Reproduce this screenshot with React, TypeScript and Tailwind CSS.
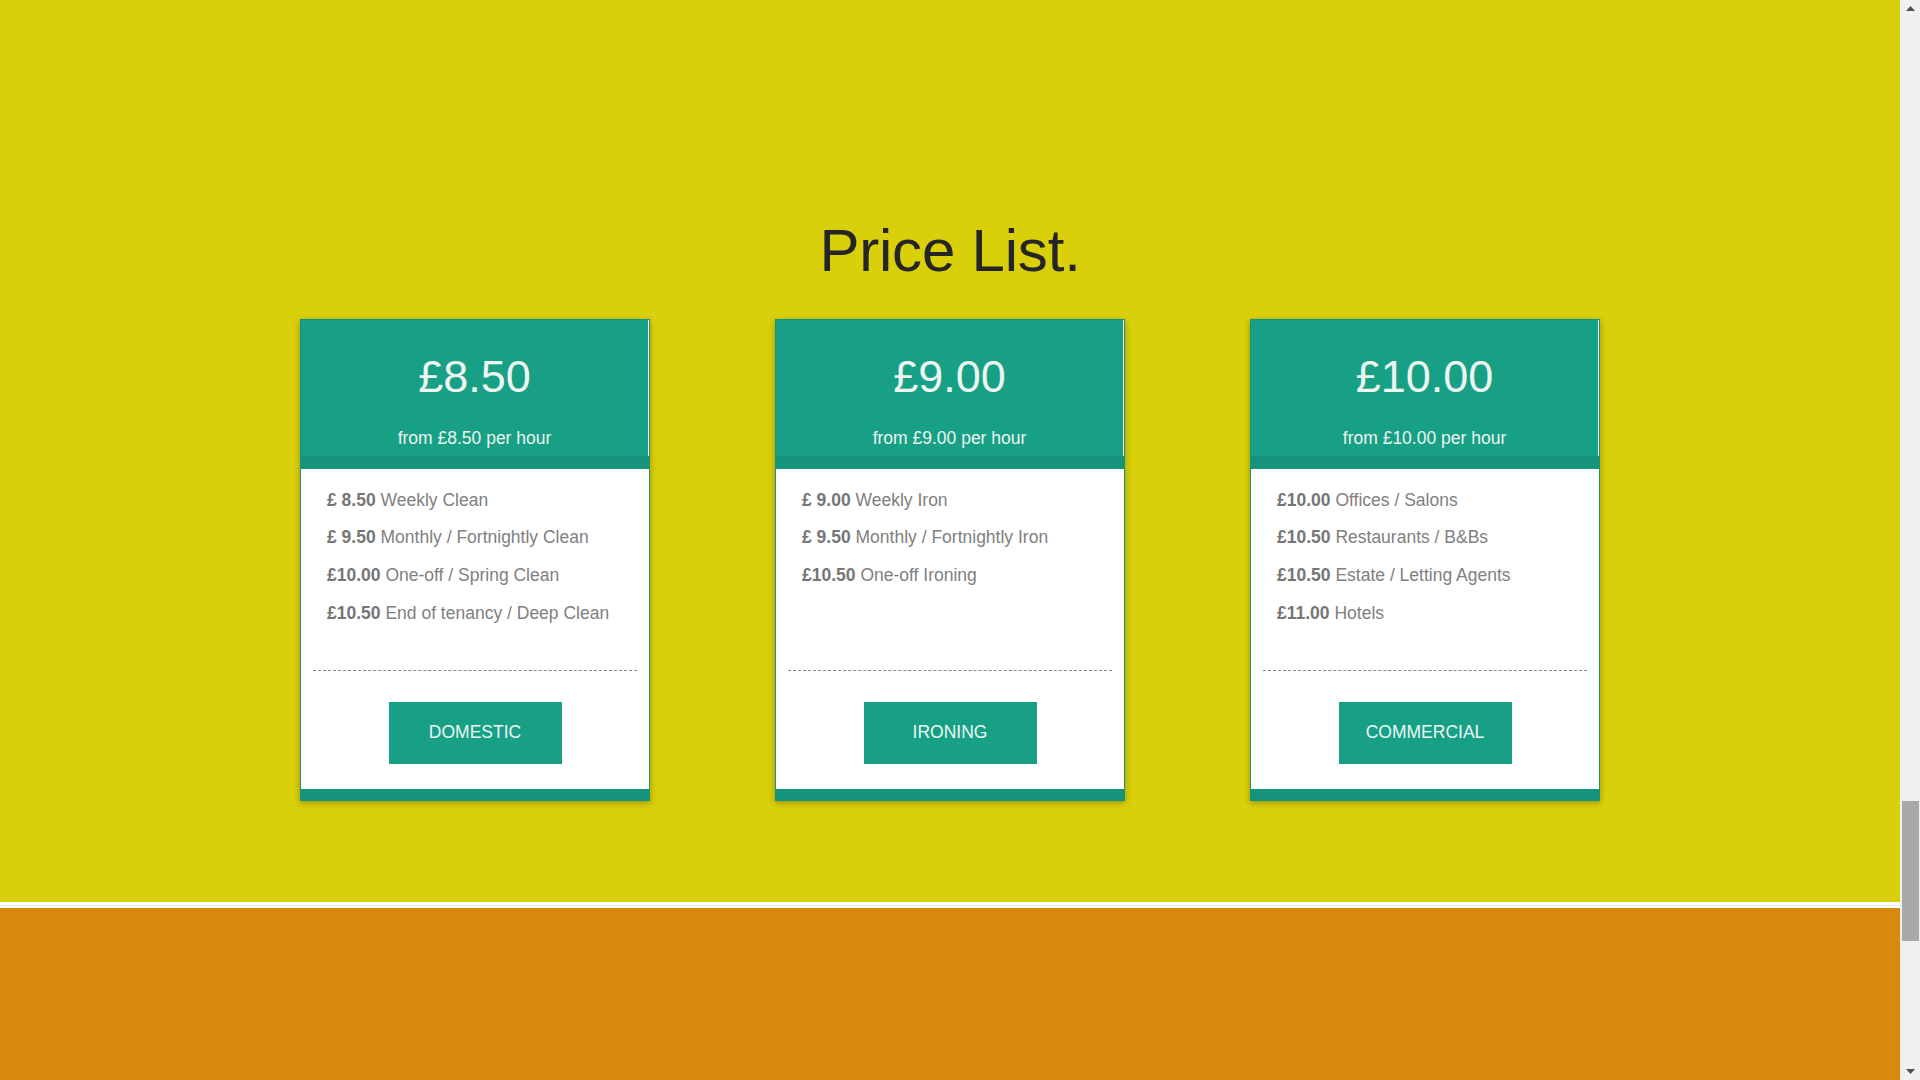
import React from "react";

const cards = [
  {
    price: "£8.50",
    from: "from £8.50 per hour",
    button: "DOMESTIC",
    items: [
      ["£ 8.50", "Weekly Clean"],
      ["£ 9.50", "Monthly / Fortnightly Clean"],
      ["£10.00", "One-off / Spring Clean"],
      ["£10.50", "End of tenancy / Deep Clean"],
    ],
  },
  {
    price: "£9.00",
    from: "from £9.00 per hour",
    button: "IRONING",
    items: [
      ["£ 9.00", "Weekly Iron"],
      ["£ 9.50", "Monthly / Fortnightly Iron"],
      ["£10.50", "One-off Ironing"],
    ],
  },
  {
    price: "£10.00",
    from: "from £10.00 per hour",
    button: "COMMERCIAL",
    items: [
      ["£10.00", "Offices / Salons"],
      ["£10.50", "Restaurants / B&Bs"],
      ["£10.50", "Estate / Letting Agents"],
      ["£11.00", "Hotels"],
    ],
  },
];

function PriceCard({ card }: { card: (typeof cards)[number] }) {
  return (
    <div className="w-[350px] border border-[#16947b] bg-white flex flex-col shadow-[0_2px_6px_rgba(0,0,0,0.3)]">
      <div className="mr-px bg-[#17a086] flex flex-col items-center pt-[34px] pb-[8px] text-[#ecf5ef]">
        <div className="text-[45px] leading-none">{card.price}</div>
        <div className="mt-[31px] text-[17.5px] leading-none">{card.from}</div>
      </div>
      <div className="h-[13px] bg-[#16947b]" />
      <div className="h-[201px] pt-[13px] pl-[26px] text-[17.5px] leading-[37.8px] text-[#808080]">
        {card.items.map(([p, label]) => (
          <div key={label}>
            <span className="font-bold text-[#767676]">{p}</span> {label}
          </div>
        ))}
      </div>
      <div className="mx-[12px] border-t border-dashed border-[#8a8a8a]" />
      <div className="flex justify-center pt-[31px] pb-[25px]">
        <button className="w-[173px] h-[62px] bg-[#17a086] text-[#ecf8f2] text-[17.5px]">
          {card.button}
        </button>
      </div>
      <div className="h-[11px] bg-[#16947b]" />
    </div>
  );
}

export default function App() {
  return (
    <div className="flex h-screen w-full overflow-hidden font-['Liberation_Sans',Arial,sans-serif]">
      <div className="flex-1 flex flex-col">
        <section className="h-[902px] bg-[#d9cf0a] flex flex-col items-center pt-[221px]">
          <h2 className="text-[60px] leading-none text-[#252525] tracking-[-0.2px]">Price List.</h2>
          <div className="mt-[38px] w-[1300px] flex justify-between">
            {cards.map((c) => (
              <PriceCard key={c.button} card={c} />
            ))}
          </div>
        </section>
        <div className="h-[6px] bg-white flex flex-col justify-center">
          <div className="h-px bg-[#e6e9e4]" />
        </div>
        <div className="flex-1 bg-[#d8880c]" />
      </div>
      {/* fake scrollbar */}
      <div className="w-[20px] bg-[#f0f0f0] flex flex-col items-center">
        <div className="h-[17px] flex items-center justify-center">
          <svg width="9" height="5" viewBox="0 0 9 5"><path d="M0 5 L4.5 0 L9 5 Z" fill="#505050" /></svg>
        </div>
        <div className="h-[784px]" />
        <div className="w-[17px] h-[140px] bg-[#a8a8a8]" />
        <div className="flex-1" />
        <div className="h-[17px] flex items-center justify-center">
          <svg width="9" height="5" viewBox="0 0 9 5"><path d="M0 0 L9 0 L4.5 5 Z" fill="#505050" /></svg>
        </div>
      </div>
    </div>
  );
}
